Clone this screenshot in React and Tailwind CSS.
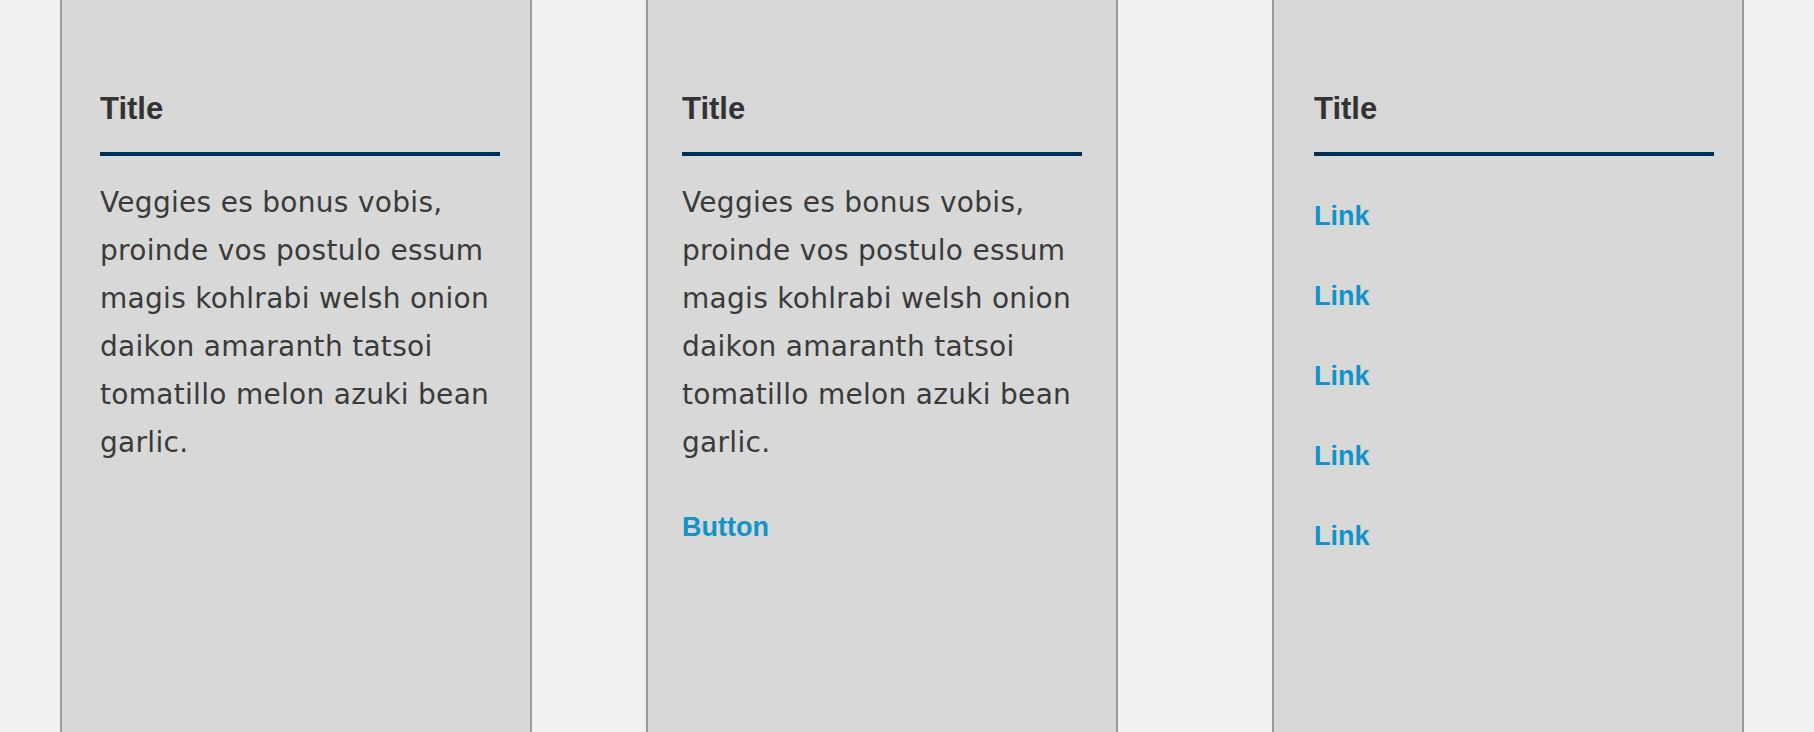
import React from 'react'

const copy = 'Veggies es bonus vobis, proinde vos postulo essum magis kohlrabi welsh onion daikon amaranth tatsoi tomatillo melon azuki bean garlic.'

function Card({ className, children }) {
  return (
    <div className={`w-[472px] shrink-0 h-full bg-[#d8d8d8] border-x-2 border-[#9a9a9a] pt-[91px] ${className}`}>
      <h3 className="text-[31px] leading-[36px] font-bold text-[#333333] font-['Liberation_Sans',Arial,sans-serif]">
        Title
      </h3>
      <div className="mt-[25px] h-[4px] w-[400px] bg-[#003057]" />
      {children}
    </div>
  )
}

function Body() {
  return (
    <p className="mt-[23px] w-[400px] text-[28px] leading-[48px] tracking-[0.3px] text-[#3a3a3a] font-['DejaVu_Sans',Verdana,sans-serif]">
      {copy}
    </p>
  )
}

export default function App() {
  const links = ['Link', 'Link', 'Link', 'Link', 'Link']

  return (
    <div className="flex h-[732px] overflow-hidden bg-[#f1f1f1]">
      {/* Text only */}
      <Card className="ml-[60px] pl-[38px]">
        <Body />
      </Card>

      {/* Text + button */}
      <Card className="ml-[114px] pl-[34px]">
        <Body />
        <button className="mt-[44px] block text-[27px] leading-[32px] font-bold text-[#1194c9] font-['Liberation_Sans',Arial,sans-serif]">
          Button
        </button>
      </Card>

      {/* Link list */}
      <Card className="ml-[154px] pl-[40px]">
        <ul className="mt-[44px] flex flex-col gap-[48px]">
          {links.map((l, i) => (
            <li key={i}>
              <a href="#" className="block text-[27px] leading-[32px] font-bold text-[#1194c9] font-['Liberation_Sans',Arial,sans-serif]">
                {l}
              </a>
            </li>
          ))}
        </ul>
      </Card>
    </div>
  )
}
